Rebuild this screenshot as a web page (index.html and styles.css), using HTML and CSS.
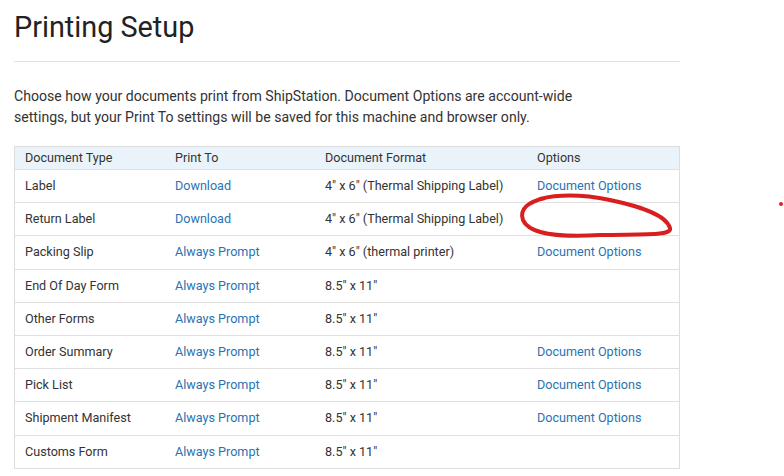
FILE: index.html
```html
<!DOCTYPE html>
<html>
<head>
<meta charset="utf-8">
<link rel="stylesheet" href="styles.css">
</head>
<body>
<div class="page">
  <h1 class="title">Printing Setup</h1>
  <hr class="rule">
  <p class="intro">Choose how your documents print from ShipStation. Document Options are account-wide settings, but your Print To settings will be saved for this machine and browser only.</p>
  <table class="docs">
    <thead>
      <tr><th class="c1">Document Type</th><th class="c2">Print To</th><th class="c3">Document Format</th><th class="c4">Options</th></tr>
    </thead>
    <tbody>
      <tr><td>Label</td><td><a class="lnk">Download</a></td><td>4" x 6" (Thermal Shipping Label)</td><td><a class="lnk">Document Options</a></td></tr>
      <tr><td>Return Label</td><td><a class="lnk">Download</a></td><td>4" x 6" (Thermal Shipping Label)</td><td></td></tr>
      <tr><td>Packing Slip</td><td><a class="lnk">Always Prompt</a></td><td>4" x 6" (thermal printer)</td><td><a class="lnk">Document Options</a></td></tr>
      <tr><td>End Of Day Form</td><td><a class="lnk">Always Prompt</a></td><td>8.5" x 11"</td><td></td></tr>
      <tr><td>Other Forms</td><td><a class="lnk">Always Prompt</a></td><td>8.5" x 11"</td><td></td></tr>
      <tr><td>Order Summary</td><td><a class="lnk">Always Prompt</a></td><td>8.5" x 11"</td><td><a class="lnk">Document Options</a></td></tr>
      <tr><td>Pick List</td><td><a class="lnk">Always Prompt</a></td><td>8.5" x 11"</td><td><a class="lnk">Document Options</a></td></tr>
      <tr><td>Shipment Manifest</td><td><a class="lnk">Always Prompt</a></td><td>8.5" x 11"</td><td><a class="lnk">Document Options</a></td></tr>
      <tr><td>Customs Form</td><td><a class="lnk">Always Prompt</a></td><td>8.5" x 11"</td><td></td></tr>
    </tbody>
  </table>
</div>
<svg class="annot" width="784" height="476" viewBox="0 0 784 476">
  <path d="M540 199 C560 194 585 195 610 200 C638 206 666 214 670 228 C672 236 645 234 600 235 C565 237 530 236 523 220 C519 209 528 202 545 198" fill="none" stroke="#d81e1e" stroke-width="4" stroke-linecap="round" stroke-linejoin="round"/>
  <circle cx="781" cy="204" r="2" fill="#e02020"/>
</svg>
</body>
</html>
```
FILE: styles.css
```css
html, body {
  margin: 0;
  padding: 0;
  background: #fff;
}
body {
  font-family: Roboto, "Liberation Sans", sans-serif;
  color: #333;
  width: 784px;
  height: 476px;
  overflow: hidden;
  position: relative;
}
.page {
  padding: 0 0 0 14px;
  width: 666px;
}
.title {
  margin: 0;
  padding-top: 10px;
  font-size: 28.8px;
  font-weight: 400;
  line-height: 34px;
  color: #222;
}
.rule {
  margin: 17px 0 0 0;
  border: 0;
  border-top: 1px solid #e2e2e2;
  height: 0;
}
.intro {
  margin: 24px 0 0 0;
  font-size: 14.1px;
  line-height: 21px;
  color: #333;
  width: 590px;
}
.docs {
  margin-top: 18px;
  width: 666px;
  border-collapse: collapse;
  border: 1px solid #ddd;
  font-size: 12.6px;
  color: #333;
}
.docs th {
  background: #eaf3f9;
  font-weight: 400;
  text-align: left;
  height: 22px;
  padding: 0 0 0 10px;
  line-height: 16px;
}
.docs td {
  height: 32.2px;
  padding: 0 0 0 10px;
  border-top: 1px solid #e0e0e0;
  line-height: 16px;
}
.c1 { width: 140px; }
.c2 { width: 140px; }
.c3 { width: 202px; }
.lnk {
  color: #2a73b2;
  text-decoration: none;
}
.annot {
  position: absolute;
  left: 0;
  top: 0;
  pointer-events: none;
}
```
